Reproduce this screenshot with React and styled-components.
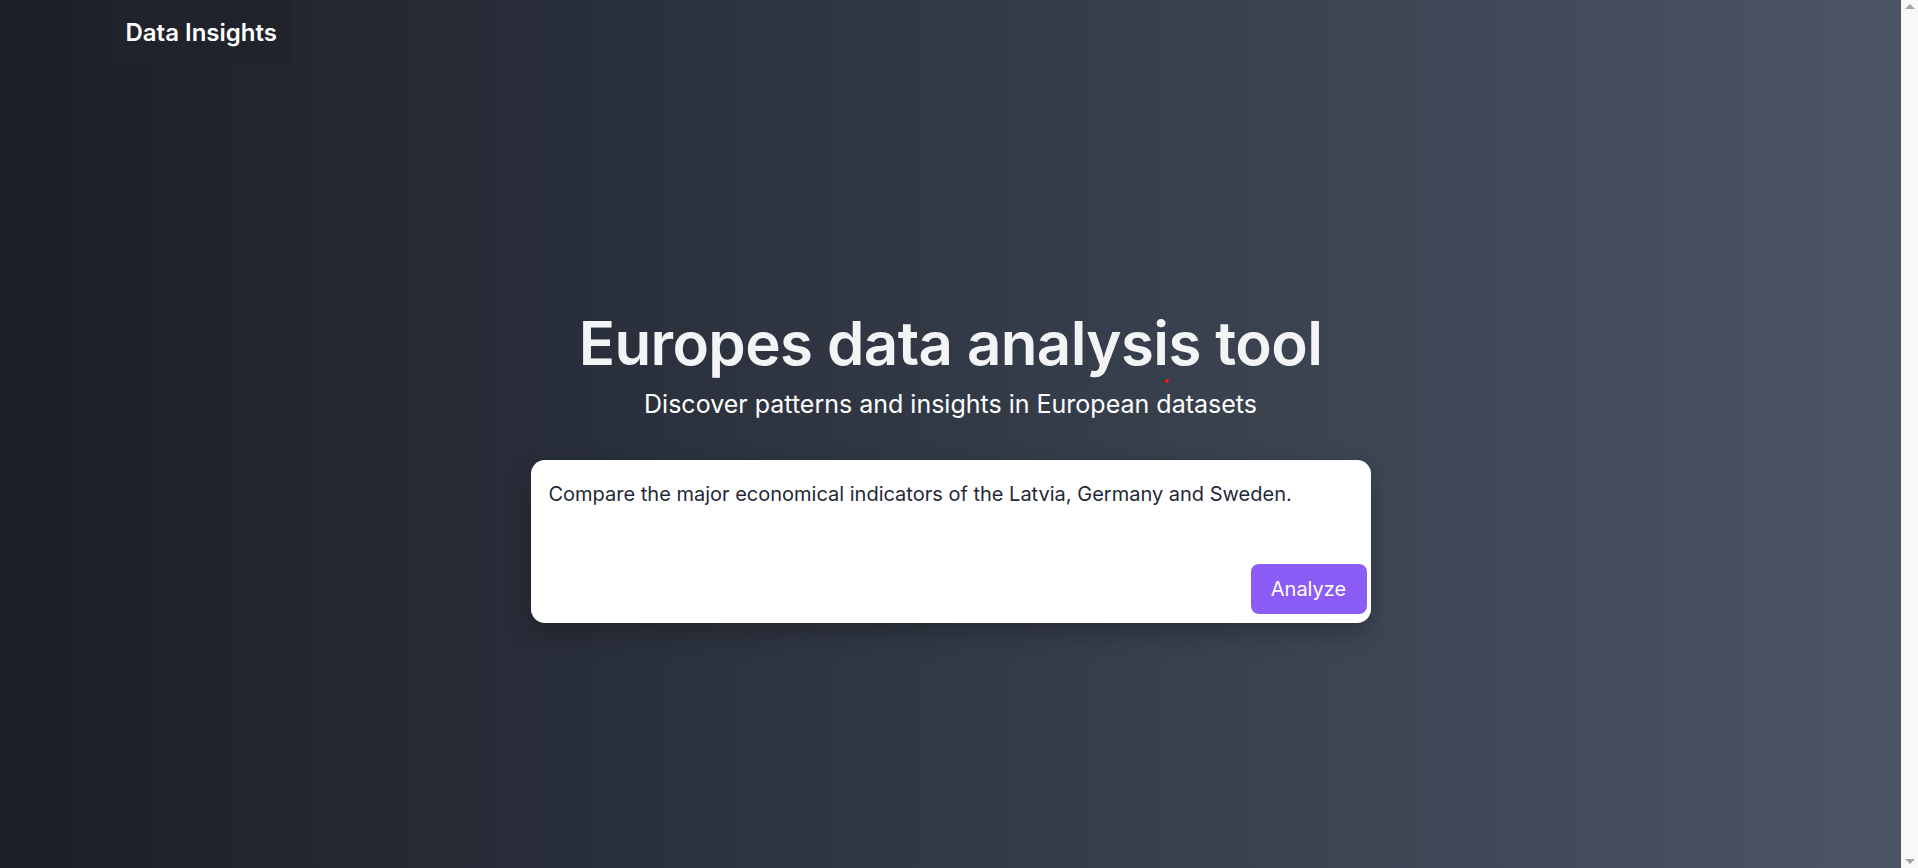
import React, { useState } from "react";
import styled, { createGlobalStyle } from "styled-components";

const GlobalStyle = createGlobalStyle`
  html, body {
    margin: 0;
    padding: 0;
    overflow: hidden;
  }
  body {
    font-family: Inter, "Noto Sans", "Liberation Sans", sans-serif;
    background: #1b1f29;
  }
  * {
    box-sizing: border-box;
  }
`;

const Window = styled.div`
  display: flex;
  height: 100vh;
`;

const Page = styled.div`
  flex: 1;
  min-width: 0;
  background: linear-gradient(to right, #1a1e27, #4b5565);
  display: flex;
  flex-direction: column;
`;

// classic browser scrollbar on the right edge
const ScrollBar = styled.div`
  width: 17px;
  flex-shrink: 0;
  background: #f8f8f8;
  display: flex;
  flex-direction: column;
  justify-content: space-between;
  align-items: center;
  padding: 4px 0 4px;
`;

const Arrow = styled.span`
  width: 0;
  height: 0;
  border-left: 5px solid transparent;
  border-right: 5px solid transparent;
  ${(props) =>
    props.down
      ? "border-top: 5px solid #a3a3a3;"
      : "border-bottom: 5px solid #a3a3a3;"}
`;

const Nav = styled.nav`
  width: 100%;
  max-width: 1680px;
  margin: 0 auto;
  display: flex;
  align-items: center;
`;

const Logo = styled.div`
  height: 64px;
  padding: 0 15px;
  display: flex;
  align-items: center;
  background: #20232b;
  color: #ffffff;
  font-size: 24px;
  font-weight: 600;
`;

const Hero = styled.main`
  padding-top: 249px;
  display: flex;
  flex-direction: column;
  align-items: center;
`;

const Title = styled.h1`
  position: relative;
  margin: 0 0 15px;
  font-size: 60px;
  line-height: 60px;
  font-weight: 600;
  letter-spacing: -0.6px;
  color: #f3f4f6;
`;

// small red marker under the title
const Dot = styled.span`
  position: absolute;
  left: 586px;
  top: 66px;
  width: 4px;
  height: 4px;
  border-radius: 50%;
  background: #ee1c1c;
`;

const Subtitle = styled.p`
  margin: 0 0 40px;
  font-size: 25px;
  line-height: 32px;
  color: #ffffff;
`;

const Card = styled.form`
  width: 840px;
  height: 163px;
  background: #ffffff;
  border-radius: 14px;
  box-shadow: 0 10px 25px rgba(0, 0, 0, 0.25);
  padding: 16px 4px 9px 16px;
  display: flex;
  flex-direction: column;
`;

const Input = styled.textarea`
  flex: 1;
  border: none;
  outline: none;
  resize: none;
  padding: 4px 2px;
  margin-right: 12px;
  font-family: Inter, "Noto Sans", "Liberation Sans", sans-serif;
  font-size: 20px;
  line-height: 28px;
  color: #1f2937;
  background: transparent;
`;

const Actions = styled.div`
  display: flex;
  justify-content: flex-end;
`;

const Button = styled.button`
  width: 116px;
  height: 50px;
  border: none;
  border-radius: 8px;
  background: #8b5cf6;
  color: #ffffff;
  font-family: Inter, "Noto Sans", "Liberation Sans", sans-serif;
  font-size: 20px;
  cursor: pointer;
`;

export default function App() {
  const [query, setQuery] = useState(
    "Compare the major economical indicators of the Latvia, Germany and Sweden."
  );

  return (
    <>
      <GlobalStyle />
      <Window>
        <Page>
          <Nav>
            <Logo>Data Insights</Logo>
          </Nav>
          <Hero>
            <Title>
              Europes data analysis tool
              <Dot />
            </Title>
            <Subtitle>Discover patterns and insights in European datasets</Subtitle>
            <Card onSubmit={(e) => e.preventDefault()}>
              <Input value={query} onChange={(e) => setQuery(e.target.value)} />
              <Actions>
                <Button type="submit">Analyze</Button>
              </Actions>
            </Card>
          </Hero>
        </Page>
        <ScrollBar>
          <Arrow />
          <Arrow down />
        </ScrollBar>
      </Window>
    </>
  );
}
